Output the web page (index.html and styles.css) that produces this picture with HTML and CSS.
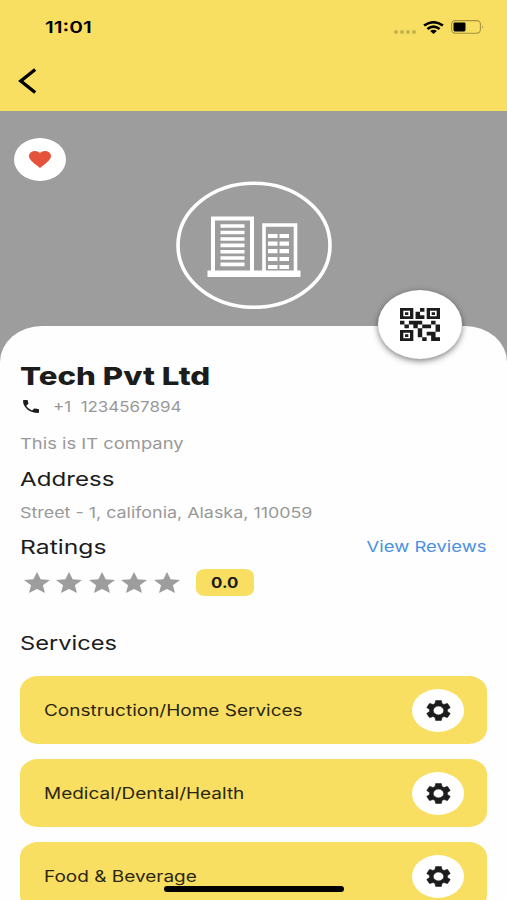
FILE: index.html
```
<!DOCTYPE html>
<html lang="en">
<head>
    <meta charset="UTF-8">
    <meta name="viewport" content="width=device-width, initial-scale=1.0">
    <title>Tech Pvt Ltd</title>
    <link rel="stylesheet" href="styles.css">
</head>
<body>
    <svg class="sprite" aria-hidden="true">
        <symbol id="star" viewBox="2 2 20 19" preserveAspectRatio="none">
            <path d="M12 17.27L18.18 21l-1.64-7.03L22 9.24l-7.19-.61L12 2 9.19 8.63 2 9.24l5.46 4.73L5.82 21z"/>
        </symbol>
        <symbol id="gear" viewBox="2 2 20 20" preserveAspectRatio="none">
            <path d="M19.14 12.94c.04-.3.06-.61.06-.94 0-.32-.02-.64-.07-.94l2.03-1.58c.18-.14.23-.41.12-.61l-1.92-3.32c-.12-.22-.37-.29-.59-.22l-2.39.96c-.5-.38-1.03-.7-1.62-.94l-.36-2.54c-.04-.24-.24-.41-.48-.41h-3.84c-.24 0-.43.17-.47.41l-.36 2.54c-.59.24-1.13.57-1.62.94l-2.39-.96c-.22-.08-.47 0-.59.22L2.74 8.87c-.12.21-.08.47.12.61l2.03 1.58c-.05.3-.09.63-.09.94s.02.64.07.94l-2.03 1.58c-.18.14-.23.41-.12.61l1.92 3.32c.12.22.37.29.59.22l2.39-.96c.5.38 1.03.7 1.62.94l.36 2.54c.05.24.24.41.48.41h3.84c.24 0 .44-.17.47-.41l.36-2.54c.59-.24 1.13-.56 1.62-.94l2.39.96c.22.08.47 0 .59-.22l1.92-3.32c.12-.22.07-.47-.12-.61l-2.01-1.58zM12 16.200a4.200 4.200 0 1 1 0-8.400 4.200 4.200 0 0 1 0 8.400z"/>
        </symbol>
    </svg>

    <div class="screen">
        <header class="header">
            <div class="status-bar">
                <span class="time wide">11:01</span>
                <div class="status-icons">
                    <div class="dots"><i></i><i></i><i></i><i></i></div>
                    <svg class="wifi" viewBox="0 0 20 13" preserveAspectRatio="none">
                        <g fill="none" stroke="#000" stroke-width="2.5">
                            <path d="M1 4.6Q10-2.2 19 4.6"/>
                            <path d="M4.2 7.9Q10 3.3 15.8 7.9"/>
                        </g>
                        <path d="M6.8 10Q10 7.6 13.2 10L10 13z"/>
                    </svg>
                    <svg class="battery" viewBox="0 0 33 14">
                        <rect x=".6" y=".6" width="28.8" height="12.6" rx="3.6" fill="none" stroke="#a8923f" stroke-width="1.1"/>
                        <rect x="2.5" y="2.4" width="12" height="9" rx="1.4"/>
                        <path d="M31 5q1.600 2 0 4z" fill="#8f7c35"/>
                    </svg>
                </div>
            </div>
            <svg class="back" viewBox="0 0 20 28">
                <path d="M17.200 2.500L2.800 14l14.400 11.500" fill="none" stroke="#000" stroke-width="3.400"/>
            </svg>
        </header>

        <section class="hero">
            <div class="favourite">
                <svg class="heart" viewBox="2 3 20 18.350" preserveAspectRatio="none">
                    <path d="M12 21.350l-1.450-1.320C5.400 15.360 2 12.280 2 8.500 2 5.420 4.420 3 7.500 3c1.740 0 3.410.81 4.500 2.090C13.090 3.810 14.760 3 16.500 3 19.580 3 22 5.420 22 8.500c0 3.780-3.400 6.860-8.550 11.540L12 21.350z"/>
                </svg>
            </div>
            <svg class="logo" viewBox="0 0 156 128">
                <g fill="none" stroke="#fff">
                    <ellipse cx="78" cy="64.300" rx="76" ry="62" stroke-width="3.600"/>
                    <path d="M37 92V37.500h39V92" stroke-width="4"/>
                    <path d="M88 92V44h31.500v48" stroke-width="3.600"/>
                </g>
                <path d="M31.500 89.500h93v6.500h-93z" fill="#fff"/>
                <path d="M44.500 45h24M44.500 51.500h24M44.500 58h24M44.500 64.400h24M44.500 70.700h24M44.500 77h24M44.500 83.400h24" stroke="#fff" stroke-width="3.600"/>
                <path d="M92 55h21M92 62.600h21M92 70.200h21M92 78h21M92 86h21" stroke="#fff" stroke-width="4.200" stroke-dasharray="9.500 2"/>
            </svg>
        </section>

        <main class="details">
            <div class="qr">
                <svg class="qr-code" viewBox="3 3 18 18" preserveAspectRatio="none">
                    <path d="M15 21h-2v-2h2v2zm-2-7h-2v5h2v-5zm8-2h-2v4h2v-4zm-2-2h-2v2h2v-2zM7 12H5v2h2v-2zm-2-2H3v2h2v-2zm7-5h2V3h-2v2zm-7.500-.500v3h3v-3h-3zM9 9H3V3h6v6zm-4.500 7.500v3h3v-3h-3zM9 21H3v-6h6v6zm7.500-16.500v3h3v-3h-3zM21 9h-6V3h6v6zm-2 10v-3h-4v2h2v3h4v-2h-2zm-2-7h-4v2h4v-2zm-4-2H7v2h2v2h2v-2h2v-2zm1-1V7h-2V5h-2v4h4zM6.750 5.250h-1.500v1.500h1.500v-1.500zm0 12h-1.500v1.500h1.500v-1.500zm12-12h-1.500v1.500h1.500v-1.500z"/>
                </svg>
            </div>

            <h1 class="name"><span class="wide">Tech Pvt Ltd</span></h1>
            <div class="phone">
                <svg class="phone-icon" viewBox="3 3 18 18" preserveAspectRatio="none">
                    <path d="M6.620 10.790c1.440 2.830 3.760 5.140 6.590 6.590l2.200-2.200c.27-.27.67-.36 1.020-.24 1.120.37 2.330.57 3.570.57.55 0 1 .45 1 1V20c0 .55-.45 1-1 1C10.610 21 3 13.390 3 4c0-.55.45-1 1-1h3.500c.55 0 1 .45 1 1 0 1.250.2 2.450.57 3.570.11.35.03.74-.25 1.020l-2.200 2.200z"/>
                </svg>
                <span class="wide">+1&nbsp; 1234567894</span>
            </div>
            <p class="about"><span class="wide">This is IT company</span></p>

            <h2 class="heading"><span class="wide">Address</span></h2>
            <p class="street"><span class="wide">Street - 1, califonia, Alaska, 110059</span></p>

            <div class="ratings-head">
                <h2 class="heading"><span class="wide">Ratings</span></h2>
                <a class="reviews"><span class="wide">View Reviews</span></a>
            </div>
            <div class="rating">
                <div class="stars">
                    <svg><use href="#star"/></svg>
                    <svg><use href="#star"/></svg>
                    <svg><use href="#star"/></svg>
                    <svg><use href="#star"/></svg>
                    <svg><use href="#star"/></svg>
                </div>
                <span class="score"><span class="wide">0.0</span></span>
            </div>

            <h2 class="heading services-title"><span class="wide">Services</span></h2>
            <div class="services">
                <div class="service">
                    <span class="wide">Construction/Home Services</span>
                    <div class="settings"><svg><use href="#gear"/></svg></div>
                </div>
                <div class="service">
                    <span class="wide">Medical/Dental/Health</span>
                    <div class="settings"><svg><use href="#gear"/></svg></div>
                </div>
                <div class="service">
                    <span class="wide">Food &amp; Beverage</span>
                    <div class="settings"><svg><use href="#gear"/></svg></div>
                </div>
            </div>
        </main>
        <div class="home-indicator"></div>
    </div>
</body>
</html>
```
FILE: styles.css
```
* {
    box-sizing: border-box;
}
body {
    margin: 0;
    font-family: Inter, "Open Sans", sans-serif;
    color: #1c1c1c;
    background: #fefefe;
}
h1, h2, p {
    margin: 0;
}
.sprite {
    display: none;
}
.screen {
    position: relative;
    width: 507px;
    height: 900px;
    overflow: hidden;
}
/* extended letterforms */
.wide {
    display: inline-block;
    white-space: nowrap;
    transform: scaleX(1.225);
    transform-origin: left center;
}

.header {
    height: 111px;
    background: #f8df61;
}
.status-bar {
    display: flex;
    justify-content: space-between;
    align-items: center;
    height: 54px;
    padding: 0 23px 0 45px;
}
.time {
    font-size: 16.5px;
    font-weight: 600;
    color: #000;
    transform: scaleX(1.26);
}
.status-icons {
    display: flex;
    align-items: center;
}
.dots {
    display: flex;
    gap: 2px;
    margin: 9px 7px 0 0;
}
.dots i {
    width: 4px;
    height: 4px;
    border-radius: 50%;
    background: #c7b24d;
}
.wifi {
    width: 21px;
    height: 13px;
    margin-right: 7px;
}
.battery {
    width: 33px;
    height: 14px;
}
.back {
    display: block;
    width: 20px;
    height: 28px;
    margin: 13px 0 0 18px;
}

.hero {
    display: flex;
    height: 251px;
    padding: 27px 14px 0;
    background: #9d9d9d;
}
.favourite {
    display: flex;
    align-items: center;
    justify-content: center;
    width: 52px;
    height: 43px;
    border-radius: 50%;
    background: #fff;
}
.heart {
    width: 22px;
    height: 17px;
    fill: #e6533c;
}
.logo {
    width: 156px;
    height: 128px;
    margin: 43px 0 0 110px;
}

.details {
    position: relative;
    height: 600px;
    margin-top: -36px;
    padding: 36px 20px 0;
    border-radius: 42px 42px 0 0 / 36px 36px 0 0;
    background: #fefefe;
}
.qr {
    position: absolute;
    top: -36px;
    right: 45px;
    display: flex;
    align-items: center;
    justify-content: center;
    width: 84px;
    height: 69px;
    border-radius: 50%;
    background: #fff;
    box-shadow: 0 2px 6px rgba(0, 0, 0, 0.5);
}
.qr-code {
    width: 40px;
    height: 33px;
    fill: #1c1c1c;
}

.name {
    font-size: 25px;
    font-weight: 800;
    line-height: 28px;
}
.name .wide {
    transform: scaleX(1.25);
}
.phone {
    display: flex;
    align-items: center;
    height: 20px;
    margin-top: 6px;
    font-size: 15px;
    color: #999;
}
.phone .wide {
    transform: scaleX(1.13);
}
.phone-icon {
    width: 16px;
    height: 13px;
    margin: 0 14px 0 3px;
    fill: #1c1c1c;
}
.about,
.street {
    font-size: 15px;
    line-height: 20px;
    color: #999;
}
.about {
    margin-top: 18px;
}
.street {
    margin-top: 11px;
}
.street .wide {
    transform: scaleX(1.192);
}
.heading {
    margin-top: 14px;
    font-size: 19px;
    font-weight: 400;
    line-height: 24px;
}
.heading .wide {
    transform: scaleX(1.27);
}
.ratings-head {
    display: flex;
    justify-content: space-between;
    margin-top: 13px;
}
.ratings-head .heading {
    margin-top: 0;
}
.ratings-head .heading .wide {
    transform: scaleX(1.3);
}
.reviews {
    font-size: 15px;
    line-height: 22px;
    color: #4a90e2;
}
.reviews .wide {
    transform: scaleX(1.23);
    transform-origin: right center;
}

.rating {
    display: flex;
    align-items: center;
    height: 28px;
    margin-top: 8px;
}
.stars {
    display: flex;
    gap: 6.5px;
    padding-left: 3.5px;
}
.stars svg {
    width: 26px;
    height: 21px;
    fill: #9d9d9d;
}
.score {
    display: flex;
    align-items: center;
    justify-content: center;
    width: 58px;
    height: 27px;
    margin-left: 16px;
    border-radius: 9px / 7px;
    background: #f8df61;
    font-size: 14.5px;
    font-weight: 700;
}
.score .wide {
    transform: scaleX(1.16);
    transform-origin: center;
}

.services-title {
    margin-top: 36px;
}
.services-title .wide {
    transform: scaleX(1.245);
}
.services {
    display: flex;
    flex-direction: column;
    gap: 15px;
    margin-top: 20px;
}
.service {
    display: flex;
    align-items: center;
    justify-content: space-between;
    height: 68px;
    padding: 0 23px 0 24px;
    border-radius: 18px / 15px;
    background: #f8df61;
    font-size: 15.5px;
    color: #2b2510;
}
.settings {
    display: flex;
    align-items: center;
    justify-content: center;
    width: 52px;
    height: 43px;
    border-radius: 50%;
    background: #fff;
}
.settings svg {
    width: 25px;
    height: 21px;
    fill: #1c1c1c;
    stroke: #1c1c1c;
    stroke-width: 0.5;
}

.home-indicator {
    position: absolute;
    left: 164px;
    bottom: 8px;
    width: 180px;
    height: 6px;
    border-radius: 3px;
    background: #000;
}
```
